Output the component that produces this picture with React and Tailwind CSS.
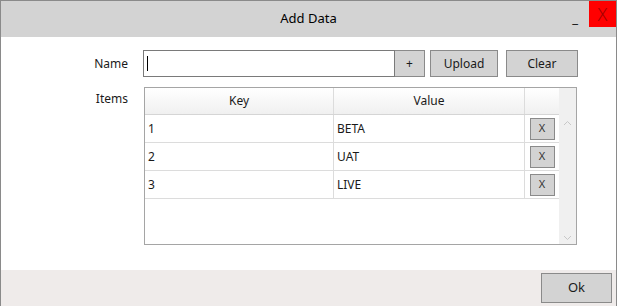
const rows = [
  { key: '1', value: 'BETA' },
  { key: '2', value: 'UAT' },
  { key: '3', value: 'LIVE' },
];

const font = { fontFamily: '"Noto Sans", "Open Sans", sans-serif' };

const App = () => {
  return (
    <div className="w-[620px] h-[306px] bg-white text-[12px] text-[#1a1a1a]" style={font}>
      <div className="w-[617px] h-full border border-b-0 border-[#8a8a8a] flex flex-col">
        {/* Title bar */}
        <div className="relative h-[36px] bg-[#d3d3d3] flex items-center justify-center shrink-0">
          <span className="text-[13px] text-black">Add Data</span>
          <span className="absolute right-[38px] top-[8px] text-[13px] text-black">_</span>
          <div className="absolute right-0 top-0 w-[27px] h-[26px] bg-[#ff0000] flex items-center justify-center">
            <span className="text-[18px] font-light text-[#a30000] leading-none">X</span>
          </div>
        </div>

        {/* Body */}
        <div className="flex-1 bg-white pt-[13px]">
          {/* Name row */}
          <div className="flex items-center h-[27px]">
            <div className="w-[127px] text-right">Name</div>
            <div className="ml-[15px] w-[252px] h-[27px] border border-[#7a7a7a] bg-white flex items-center pl-[3px]">
              <div className="w-px h-[15px] bg-black" />
            </div>
            <button className="w-[30px] h-[27px] border border-l-0 border-[#8a8a8a] bg-[#d3d3d3] text-[12px]">+</button>
            <button className="ml-[5px] w-[68px] h-[27px] border border-[#8a8a8a] bg-[#d3d3d3] text-[12px]">Upload</button>
            <button className="ml-[8px] w-[72px] h-[27px] border border-[#8a8a8a] bg-[#d3d3d3] text-[12px]">Clear</button>
          </div>

          {/* Items row */}
          <div className="flex mt-[10px]">
            <div className="w-[127px] text-right pt-[3px]">Items</div>
            <div className="ml-[16px] w-[433px] h-[158px] border border-[#a5a5a5] flex">
              <div className="flex-1 flex flex-col">
                <div className="flex h-[27px] bg-gradient-to-b from-white to-[#f0f0f0] border-b border-[#d5d5d5]">
                  <div className="w-[189px] border-r border-[#dcdcdc] flex items-center justify-center">Key</div>
                  <div className="w-[191px] border-r border-[#dcdcdc] flex items-center justify-center">Value</div>
                  <div className="flex-1" />
                </div>
                {rows.map((r) => (
                  <div key={r.key} className="flex h-[28px] border-b border-[#dcdcdc]">
                    <div className="w-[189px] border-r border-[#dcdcdc] flex items-center pl-[3px]">{r.key}</div>
                    <div className="w-[191px] border-r border-[#dcdcdc] flex items-center pl-[3px]">{r.value}</div>
                    <div className="flex-1 flex items-center justify-center">
                      <button className="w-[25px] h-[22px] border border-[#8a8a8a] bg-[#d3d3d3] text-[11px] text-[#333]">X</button>
                    </div>
                  </div>
                ))}
              </div>
              {/* Scrollbar */}
              <div className="w-[17px] bg-[#f0f0f0] flex flex-col items-center justify-between pt-[32px] pb-[3px]">
                <svg width="9" height="6" viewBox="0 0 9 6">
                  <path d="M1 5 L4.5 1.5 L8 5" fill="none" stroke="#c8c8c8" strokeWidth="1" />
                </svg>
                <svg width="9" height="6" viewBox="0 0 9 6">
                  <path d="M1 1 L4.5 4.5 L8 1" fill="none" stroke="#c8c8c8" strokeWidth="1" />
                </svg>
              </div>
            </div>
          </div>
        </div>

        {/* Footer */}
        <div className="h-[36px] bg-[#efebea] flex justify-end pt-[3px] pr-[4px] shrink-0">
          <button className="w-[71px] h-[30px] border border-[#8a8a8a] bg-[#d3d3d3] text-[13px]">Ok</button>
        </div>
      </div>
    </div>
  );
};

export default App;
